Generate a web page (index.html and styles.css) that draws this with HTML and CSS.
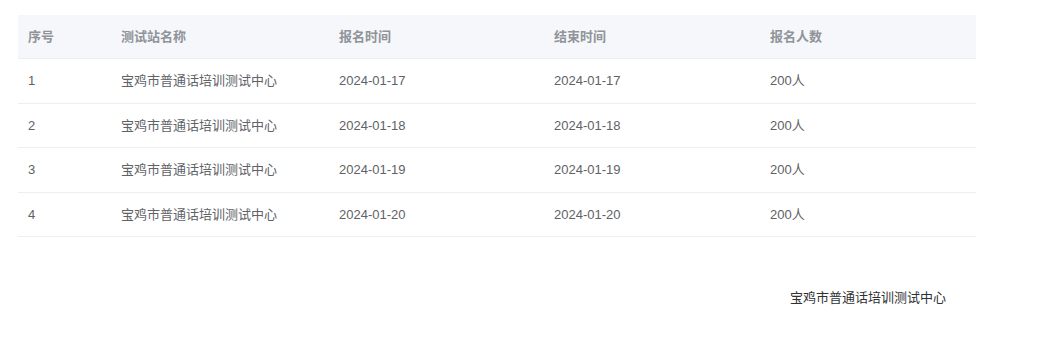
FILE: index.html
```html
<!DOCTYPE html>
<html lang="zh-CN">
<head>
<meta charset="utf-8">
<title>测试站列表</title>
<link rel="stylesheet" href="styles.css">
</head>
<body>
<div class="page">
  <table class="grid">
    <colgroup>
      <col class="c-idx">
      <col class="c-name">
      <col class="c-start">
      <col class="c-end">
      <col class="c-count">
    </colgroup>
    <thead>
      <tr><th>序号</th><th>测试站名称</th><th>报名时间</th><th>结束时间</th><th>报名人数</th></tr>
    </thead>
    <tbody>
      <tr><td>1</td><td>宝鸡市普通话培训测试中心</td><td>2024-01-17</td><td>2024-01-17</td><td>200人</td></tr>
      <tr><td>2</td><td>宝鸡市普通话培训测试中心</td><td>2024-01-18</td><td>2024-01-18</td><td>200人</td></tr>
      <tr><td>3</td><td>宝鸡市普通话培训测试中心</td><td>2024-01-19</td><td>2024-01-19</td><td>200人</td></tr>
      <tr><td>4</td><td>宝鸡市普通话培训测试中心</td><td>2024-01-20</td><td>2024-01-20</td><td>200人</td></tr>
    </tbody>
  </table>
  <div class="footer">宝鸡市普通话培训测试中心</div>
</div>
</body>
</html>
```

FILE: styles.css
```css
html, body {
  margin: 0;
  padding: 0;
  background: #fff;
}
body {
  font-family: "Liberation Sans", "Noto Sans CJK SC", sans-serif;
  font-size: 13px;
  color: #606266;
}
.page {
  width: 958px;
  padding: 15px 18px;
}
.grid {
  width: 958px;
  border-collapse: collapse;
  table-layout: fixed;
}
.c-idx { width: 93px; }
.c-name { width: 218px; }
.c-start { width: 215px; }
.c-end { width: 216px; }
.c-count { width: 216px; }
.grid th, .grid td {
  text-align: left;
  padding: 0 10px;
  border-bottom: 1px solid #ebeef5;
  line-height: 20px;
}
.grid th {
  height: 43px;
  background: #f5f7fa;
  color: #909399;
  font-weight: bold;
}
.grid td {
  height: 42.5px;
  padding-top: 1px;
  color: #606266;
}
.footer {
  margin-top: 51px;
  padding-right: 30px;
  text-align: right;
  line-height: 20px;
  color: #303133;
}
```
